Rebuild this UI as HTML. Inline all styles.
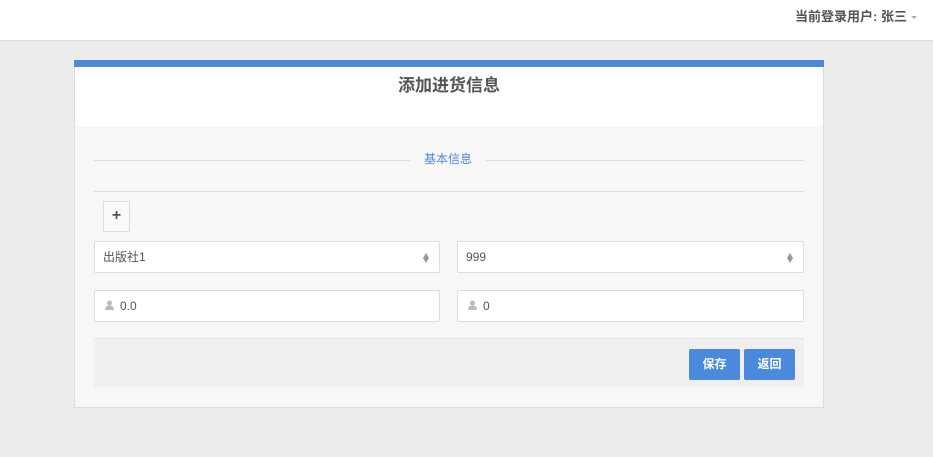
<!DOCTYPE html>
<html><head><meta charset="utf-8"><style>
*{box-sizing:border-box;margin:0;padding:0}
body{width:933px;height:457px;background:#ececec;font-family:"Liberation Sans","Noto Sans CJK SC",sans-serif;position:relative;overflow:hidden;font-size:12px;color:#555}
.top{position:absolute;left:0;top:0;width:933px;height:41px;background:#fff;border-bottom:1px solid #ddd}
.user{position:absolute;right:16px;top:6px;font-size:13px;font-weight:bold;color:#555}
.user .c{display:inline-block;width:0;height:0;border-left:3px solid transparent;border-right:3px solid transparent;border-top:3px solid #aaa;margin-left:4px;vertical-align:middle}
.card{position:absolute;left:74px;top:60px;width:750px;height:348px;background:#f7f7f7;border:1px solid #ddd;border-top:none}
.in-wrap{position:absolute;left:-1px;top:0;width:750px;height:348px}
.bar{height:7px;background:#4a89dc;margin-left:-1px;margin-right:-1px}
.head{background:#fff;height:59px;text-align:center;font-size:17px;font-weight:bold;color:#555;padding-top:4px}
.leg{position:absolute;top:90px;left:20px;width:710px;height:20px}
.leg .l{position:absolute;top:10px;height:1px;background:#ddd}
.leg span{position:absolute;left:330px;top:0;color:#4a89dc;font-size:12px}
.hr{position:absolute;left:20px;top:131px;width:710px;height:1px;background:#ddd}
.plus{position:absolute;left:29px;top:141px;width:27px;height:31px;border:1px solid #ddd;background:#f9f9f9;text-align:center;font-weight:bold;font-size:16px;line-height:28px;color:#555}
.in{position:absolute;height:32px;background:#fff;border:1px solid #ddd;border-radius:2px;font-size:12px;line-height:30px;padding-left:8px;color:#555}
.dia{position:absolute;right:10px;top:11px;width:6px;height:10px;background:#999;clip-path:polygon(50% 0,100% 50%,50% 100%,0 50%)}
.ic{display:inline-block;width:9px;height:10px;vertical-align:middle;margin:0 6px 0 2px;position:relative;top:-2px}
.foot{position:absolute;left:20px;top:278px;width:710px;height:49px;background:#efefef;border-top:1px solid #e4e4e4}
.btn{position:absolute;top:10px;width:51px;height:31px;background:#4a89dc;color:#fff;font-weight:bold;font-size:12px;text-align:center;line-height:31px;border-radius:2px}
</style></head><body>
<div class="top"><div class="user">当前登录用户: 张三<span class="c"></span></div></div>
<div class="card">
<div class="bar"></div>
<div class="head">添加进货信息</div>
<div class="in-wrap">
<div class="leg"><div class="l" style="left:0;width:316px"></div><span>基本信息</span><div class="l" style="left:392px;width:318px"></div></div>
<div class="hr"></div>
<div class="plus">+</div>
<div class="in" style="left:20px;top:181px;width:346px">出版社1<div class="dia"></div></div>
<div class="in" style="left:383px;top:181px;width:347px">999<div class="dia"></div></div>
<div class="in" style="left:20px;top:230px;width:346px"><svg class="ic" viewBox="0 0 9 10"><circle cx="4.5" cy="3" r="2.5" fill="#bbb"/><path d="M0 10 Q0 5.5 4.5 5.5 Q9 5.5 9 10Z" fill="#bbb"/></svg>0.0</div>
<div class="in" style="left:383px;top:230px;width:347px"><svg class="ic" viewBox="0 0 9 10"><circle cx="4.5" cy="3" r="2.5" fill="#bbb"/><path d="M0 10 Q0 5.5 4.5 5.5 Q9 5.5 9 10Z" fill="#bbb"/></svg>0</div>
<div class="foot"><div class="btn" style="left:595px">保存</div><div class="btn" style="left:650px">返回</div></div>
</div>
</div>
</body></html>
